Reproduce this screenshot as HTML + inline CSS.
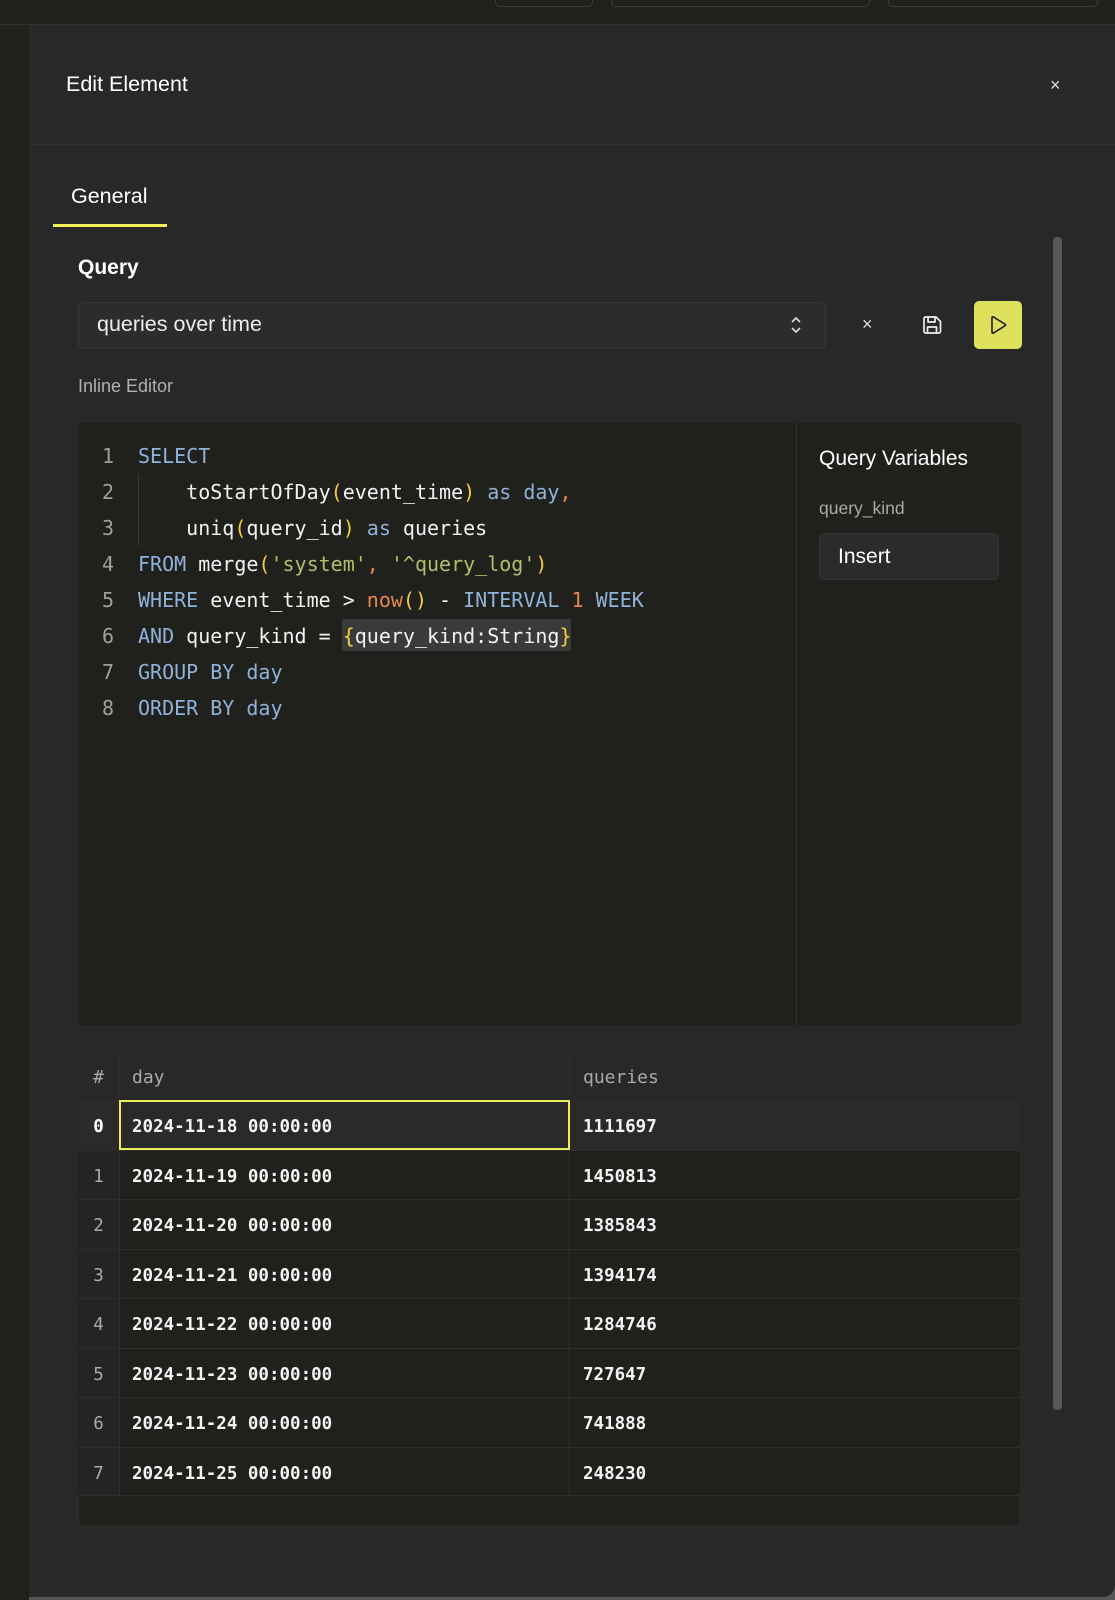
<!DOCTYPE html>
<html><head><meta charset="utf-8"><style>
*{margin:0;padding:0;box-sizing:border-box}
body{width:1115px;height:1600px;background:#555;position:relative;overflow:hidden;font-family:"Liberation Sans",sans-serif;color:#fff}
.abs{position:absolute}
.mono{font-family:"DejaVu Sans Mono","Liberation Mono",monospace}
.kw{color:#8fb3d9}.str{color:#b5bd68}.par{color:#f2cf3a}.fn{color:#e8874f}
.code div{position:absolute;left:138px;height:36px;line-height:36px;font-size:20px;white-space:pre;color:#f2f2f2}
.ln div{position:absolute;left:98px;width:20px;text-align:center;height:36px;line-height:36px;font-size:20px;color:#a0a0a0}
.row{position:absolute;left:78px;width:942px;height:49.5px;border-top:1px solid #2e2e2e;background:#20201d}
.row span{position:absolute;top:2px;line-height:49px;font-size:17.5px;font-weight:bold;color:#f4f4f4}
.row .n{left:0;top:0;padding-top:2px;width:41px;text-align:center;color:#aaa;font-weight:normal;background:#242424;height:100%}
.row .d{left:54px}.row .q{left:505px}
</style></head><body>
<div class="abs" style="left:0;top:0;width:1115px;height:25px;background:#20201d;border-bottom:1px solid #333"></div>
<div class="abs" style="left:495px;top:-6px;width:98px;height:13px;border:1px solid #3c3c3c;border-radius:5px"></div>
<div class="abs" style="left:611px;top:-6px;width:259px;height:13px;border:1px solid #3c3c3c;border-radius:5px"></div>
<div class="abs" style="left:888px;top:-6px;width:210px;height:13px;border:1px solid #3c3c3c;border-radius:5px"></div>
<div class="abs" style="left:0;top:25px;width:29px;height:1575px;background:#20201d"></div>
<div class="abs" style="left:29px;top:25px;width:1086px;height:1572px;background:#282828;border-bottom-right-radius:12px"></div>
<div class="abs" style="left:66px;top:72px;font-size:21.5px">Edit Element</div>
<div class="abs" style="left:1050px;top:75px;font-size:18px;color:#ddd">×</div>
<div class="abs" style="left:29px;top:144px;width:1086px;height:1px;background:#303030"></div>
<div class="abs" style="left:71px;top:184px;font-size:21.5px">General</div>
<div class="abs" style="left:53px;top:224px;width:114px;height:3px;background:#f0f25a"></div>
<div class="abs" style="left:1053px;top:237px;width:9px;height:1173px;background:#575757;border-radius:4px"></div>
<div class="abs" style="left:78px;top:256px;font-size:21px;font-weight:bold">Query</div>
<div class="abs" style="left:78px;top:302px;width:748px;height:47px;background:#2c2c2c;border:1px solid #363636;border-radius:5px"></div>
<div class="abs" style="left:97px;top:312px;font-size:21.5px;color:#eee">queries over time</div>
<svg class="abs" style="left:789px;top:315px" width="14" height="20" viewBox="0 0 14 20"><path d="M3 7l4-4 4 4M3 13l4 4 4-4" stroke="#ddd" stroke-width="1.6" fill="none"/></svg>
<div class="abs" style="left:862px;top:314px;font-size:18px;color:#ddd">×</div>
<svg class="abs" style="left:922px;top:315px" width="21" height="20" viewBox="0 0 21 20"><path d="M2 3.5a1.5 1.5 0 0 1 1.5-1.5H14l4.5 4.5v10a1.5 1.5 0 0 1-1.5 1.5H3.5A1.5 1.5 0 0 1 2 16.5z M6 2v5h7V2 M5.5 18v-6h9v6" stroke="#eee" stroke-width="1.7" fill="none" stroke-linejoin="round"/></svg>
<div class="abs" style="left:974px;top:301px;width:48px;height:48px;background:#dfe15c;border-radius:5px"></div>
<svg class="abs" style="left:987px;top:314px" width="22" height="22" viewBox="0 0 22 22"><path d="M5 3.5v15a.8.8 0 0 0 1.2.7l12-7.5a.8.8 0 0 0 0-1.4l-12-7.5A.8.8 0 0 0 5 3.5z" stroke="#222" stroke-width="1.6" fill="none" stroke-linejoin="round"/></svg>
<div class="abs" style="left:78px;top:376px;font-size:18px;color:#b0b0b0">Inline Editor</div>
<div class="abs" style="left:78px;top:423px;width:943px;height:602px;background:#20201d"></div>
<div class="abs" style="left:796px;top:423px;width:1px;height:602px;background:#303030"></div>
<div class="abs" style="left:138px;top:474px;width:1px;height:72px;background:#3a3a3a"></div>
<div class="ln mono">
<div style="top:438px">1</div><div style="top:474px">2</div><div style="top:510px">3</div><div style="top:546px">4</div><div style="top:582px">5</div><div style="top:618px">6</div><div style="top:654px">7</div><div style="top:690px">8</div>
</div>
<div class="abs" style="left:342px;top:619px;width:229px;height:32px;background:#3a3a3a;border-radius:2px"></div>
<div class="code mono">
<div style="top:438px"><span class="kw">SELECT</span></div>
<div style="top:474px">    toStartOfDay<span class="par">(</span>event_time<span class="par">)</span> <span class="kw">as day</span><span class="fn">,</span></div>
<div style="top:510px">    uniq<span class="par">(</span>query_id<span class="par">)</span> <span class="kw">as</span> queries</div>
<div style="top:546px"><span class="kw">FROM</span> merge<span class="par">(</span><span class="str">'system'</span><span class="fn">,</span> <span class="str">'^query_log'</span><span class="par">)</span></div>
<div style="top:582px"><span class="kw">WHERE</span> event_time &gt; <span class="fn">now</span><span class="par">()</span> - <span class="kw">INTERVAL</span> <span class="fn">1</span> <span class="kw">WEEK</span></div>
<div style="top:618px"><span class="kw">AND</span> query_kind = <span class="par">{</span>query_kind:String<span class="par">}</span></div>
<div style="top:654px"><span class="kw">GROUP BY day</span></div>
<div style="top:690px"><span class="kw">ORDER BY day</span></div>
</div>
<div class="abs" style="left:819px;top:447px;font-size:21px">Query Variables</div>
<div class="abs" style="left:819px;top:498px;font-size:17.5px;color:#aaa">query_kind</div>
<div class="abs" style="left:819px;top:533px;width:180px;height:47px;background:#2b2b2b;border:1px solid #333;border-radius:5px"></div>
<div class="abs" style="left:838px;top:545px;font-size:21px">Insert</div>
<div class="abs" style="left:78px;top:1050px;width:942px;height:477px;background:#20201d;border:1px solid #2e2e2e"></div>
<div class="abs mono" style="left:78px;top:1050px;width:942px;height:50px;background:#282828;font-size:18px;color:#aaa">
<span class="abs" style="left:0;top:3px;width:41px;text-align:center;line-height:50px">#</span>
<span class="abs" style="left:54px;top:3px;line-height:50px">day</span>
<span class="abs" style="left:505px;top:3px;line-height:50px">queries</span>
</div>
<div class="mono">
<div class="row" style="top:1100px;background:#2a2a2a"><span class="n" style="color:#fff;font-weight:bold;background:#2a2a2a">0</span><span class="d">2024-11-18 00:00:00</span><span class="q">1111697</span></div>
<div class="row" style="top:1149.5px"><span class="n">1</span><span class="d">2024-11-19 00:00:00</span><span class="q">1450813</span></div>
<div class="row" style="top:1199px"><span class="n">2</span><span class="d">2024-11-20 00:00:00</span><span class="q">1385843</span></div>
<div class="row" style="top:1248.5px"><span class="n">3</span><span class="d">2024-11-21 00:00:00</span><span class="q">1394174</span></div>
<div class="row" style="top:1298px"><span class="n">4</span><span class="d">2024-11-22 00:00:00</span><span class="q">1284746</span></div>
<div class="row" style="top:1347.5px"><span class="n">5</span><span class="d">2024-11-23 00:00:00</span><span class="q">727647</span></div>
<div class="row" style="top:1397px"><span class="n">6</span><span class="d">2024-11-24 00:00:00</span><span class="q">741888</span></div>
<div class="row" style="top:1446.5px;border-bottom:1px solid #2e2e2e"><span class="n">7</span><span class="d">2024-11-25 00:00:00</span><span class="q">248230</span></div>
</div>
<div class="abs" style="left:119px;top:1050px;width:1px;height:446px;background:#2e2e2e"></div>
<div class="abs" style="left:569px;top:1050px;width:1px;height:446px;background:#2e2e2e"></div>
<div class="abs" style="left:119px;top:1100px;width:451px;height:50px;border:2px solid #eded5a"></div>
</body></html>
